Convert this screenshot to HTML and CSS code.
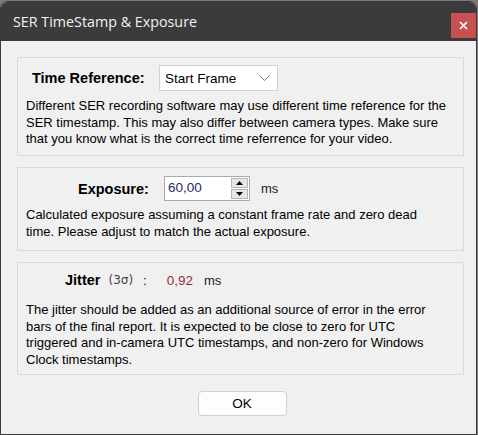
FILE: index.html
```html
<!DOCTYPE html>
<html>
<head>
    <title>SER TimeStamp &amp; Exposure</title>
    <link rel="stylesheet" href="styles.css">
</head>
<body>
    <div class="window">
        <div class="titlebar">
            <span class="title">SER TimeStamp &amp; Exposure</span>
            <span class="close">
                <svg width="9" height="9" viewBox="0 0 9 9"><path d="M1 1L8 8M8 1L1 8" stroke="#fff" stroke-width="1.6"/></svg>
            </span>
        </div>
        <div class="content">
            <div class="group group-time">
                <div class="row">
                    <label class="caption caption-time">Time Reference:</label>
                    <div class="combo">
                        <span>Start Frame</span>
                        <svg width="11" height="7" viewBox="0 0 11 7"><polyline points="0.5,0.5 5.5,5.5 10.5,0.5" fill="none" stroke="#777" stroke-width="1"/></svg>
                    </div>
                </div>
                <p class="note">Different SER recording software may use different time reference for the<br>SER timestamp. This may also differ between camera types. Make sure<br>that you know what is the correct time referrence for your video.</p>
            </div>

            <div class="group group-exposure">
                <div class="row">
                    <label class="caption caption-exposure">Exposure:</label>
                    <div class="spin">
                        <span class="spin-value">60,00</span>
                        <div class="spin-buttons">
                            <span class="spin-btn"><svg width="7" height="4" viewBox="0 0 7 4"><polygon points="0,4 7,4 3.5,0" fill="#000"/></svg></span>
                            <span class="spin-btn"><svg width="7" height="4" viewBox="0 0 7 4"><polygon points="0,0 7,0 3.5,4" fill="#000"/></svg></span>
                        </div>
                    </div>
                    <span class="unit">ms</span>
                </div>
                <p class="note">Calculated exposure assuming a constant frame rate and zero dead<br>time. Please adjust to match the actual exposure.</p>
            </div>

            <div class="group group-jitter">
                <div class="row jitter-row">
                    <span class="caption">Jitter</span>
                    <span class="sigma">(3σ)</span>
                    <span class="colon">:</span>
                    <span class="jitter-value">0,92</span>
                    <span class="unit">ms</span>
                </div>
                <p class="note">The jitter should be added as an additional source of error in the error<br>bars of the final report. It is expected to be close to zero for UTC<br>triggered and in-camera UTC timestamps, and non-zero for Windows<br>Clock timestamps.</p>
            </div>

            <div class="actions">
                <button type="button" class="ok">OK</button>
            </div>
        </div>
    </div>
</body>
</html>
```

FILE: styles.css
```css
html, body {
    margin: 0;
    padding: 0;
}

body {
    background-color: #7b7b7b;
    width: 478px;
    height: 435px;
    overflow: hidden;
    font-family: "Liberation Sans", Arial, sans-serif;
    font-size: 13px;
    color: #000;
}

.window {
    box-sizing: border-box;
    width: 477px;
    height: 434px;
    margin-top: 1px;
    border: 1px solid #3a3a3a;
    border-radius: 7px 7px 0 0;
    background-color: #f0f0f0;
    overflow: hidden;
}

.titlebar {
    height: 39px;
    background-color: #3b3b3b;
    display: flex;
    align-items: flex-start;
    justify-content: space-between;
}

.title {
    font-family: "Open Sans", "Noto Sans", sans-serif;
    font-size: 14.3px;
    color: #f2f2f2;
    margin: 10px 0 0 12px;
}

.close {
    width: 25px;
    height: 25px;
    margin-top: 11px;
    background-color: #c75151;
    display: flex;
    align-items: center;
    justify-content: center;
}

.content {
    padding: 16px 12px 0 16px;
}

.group {
    box-sizing: border-box;
    border: 1px solid #dadada;
    margin-bottom: 11px;
    padding: 0 8px;
}

.group-time {
    height: 99px;
    padding-top: 7px;
}

.group-exposure {
    height: 84px;
    padding-top: 8px;
}

.group-jitter {
    height: 113px;
    padding-top: 8px;
}

.row {
    display: flex;
    align-items: center;
}

.caption {
    font-weight: bold;
    font-size: 14.5px;
}

.caption-time {
    margin-left: 6px;
    width: 127px;
}

.combo {
    box-sizing: border-box;
    width: 119px;
    height: 26px;
    background-color: #fff;
    border: 1px solid #d2d2d2;
    display: flex;
    align-items: center;
    justify-content: space-between;
    padding: 0 7px 0 5px;
    font-size: 13.5px;
}

.note {
    margin: 0;
    line-height: 16.5px;
}

.group-time .note {
    margin-top: 7px;
}

.caption-exposure {
    margin-left: 52px;
    width: 86px;
}

.spin {
    box-sizing: border-box;
    width: 86px;
    height: 25px;
    background-color: #fff;
    border: 1px solid #aaaaaa;
    display: flex;
    align-items: center;
    justify-content: space-between;
    padding: 0 1px 0 3px;
    font-size: 13.5px;
}

.spin-value {
    color: #1f2a66;
    margin-top: -2px;
}

.spin-buttons {
    display: flex;
    flex-direction: column;
    gap: 1px;
}

.spin-btn {
    box-sizing: border-box;
    width: 17px;
    height: 10px;
    background-color: #e6e6e6;
    border: 1px solid #b5b5b5;
    display: flex;
    align-items: center;
    justify-content: center;
}

.unit {
    margin-left: 11px;
    color: #222;
}

.group-exposure .note {
    margin-top: 6px;
}

.jitter-row {
    margin-left: 39px;
    height: 18px;
}

.sigma {
    font-family: "DejaVu Sans", sans-serif;
    font-size: 12px;
    color: #444;
    margin-left: 8px;
}

.colon {
    margin-left: 10px;
}

.jitter-value {
    color: #9a2d3a;
    margin-left: 20px;
    font-size: 13.5px;
}

.group-jitter .note {
    margin-top: 13px;
}

.actions {
    display: flex;
    justify-content: center;
    padding-top: 5px;
    padding-left: 3px;
}

.ok {
    width: 89px;
    height: 25px;
    background-color: #fdfdfd;
    border: 1px solid #d0d0d0;
    border-radius: 4px;
    font-family: "Liberation Sans", Arial, sans-serif;
    font-size: 13.5px;
    color: #000;
}
```
